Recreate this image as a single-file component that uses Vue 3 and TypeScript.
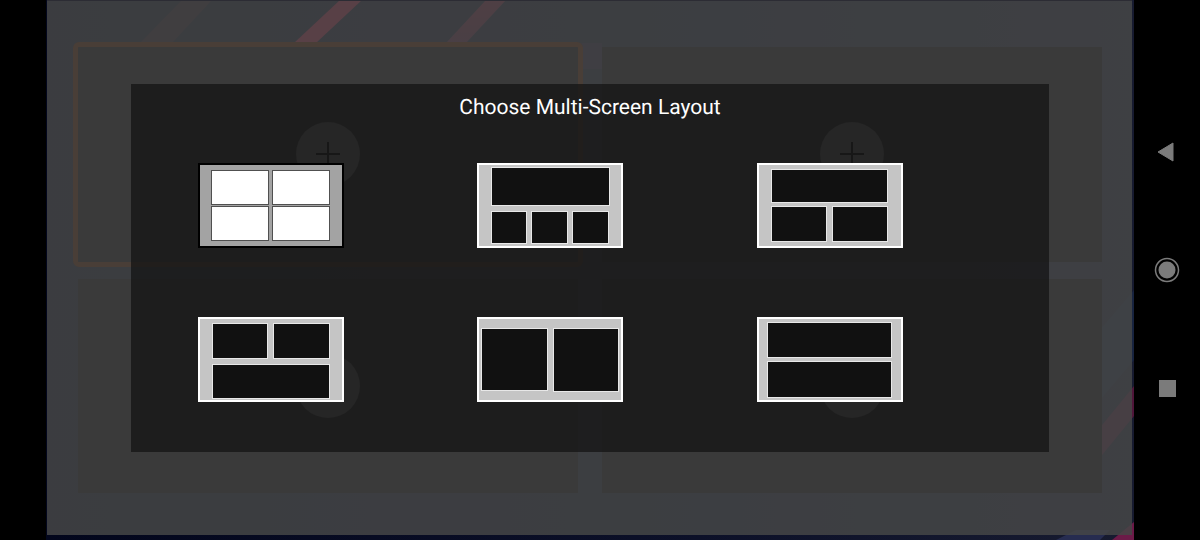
<script setup lang="ts">
import { ref } from 'vue'

type Pane = [x: number, y: number, width: number, height: number]

interface LayoutOption {
  id: string
  label: string
  panes: Pane[]
}

const layouts: LayoutOption[] = [
  {
    id: 'quad',
    label: 'Four screens',
    panes: [[14, 8, 56, 33], [75, 8, 56, 33], [14, 44, 56, 33], [75, 44, 56, 33]],
  },
  {
    id: 'one-three',
    label: 'One screen above three',
    panes: [[15, 5, 117, 37], [15, 49, 34, 31], [55, 49, 35, 31], [96, 49, 35, 31]],
  },
  {
    id: 'one-two',
    label: 'One screen above two',
    panes: [[15, 7, 115, 32], [15, 44, 54, 34], [76, 44, 54, 34]],
  },
  {
    id: 'two-one',
    label: 'Two screens above one',
    panes: [[15, 7, 54, 34], [76, 7, 55, 34], [15, 48, 116, 33]],
  },
  {
    id: 'side-by-side',
    label: 'Two screens side by side',
    panes: [[5, 12, 65, 61], [77, 12, 64, 62]],
  },
  {
    id: 'stacked',
    label: 'Two stacked screens',
    panes: [[11, 6, 123, 34], [11, 45, 123, 35]],
  },
]

const slots = [1, 2, 3, 4]
const activeSlot = ref(1)
const selected = ref('quad')
</script>

<template>
  <div class="device">
    <main class="stage">
      <svg class="wallpaper" viewBox="0 0 1088 540" preserveAspectRatio="none" aria-hidden="true">
        <defs>
          <linearGradient id="sky" x1="0" y1="0" x2="1" y2="0">
            <stop offset="0" stop-color="#02061c" />
            <stop offset="0.6" stop-color="#0c1028" />
            <stop offset="1" stop-color="#171b30" />
          </linearGradient>
          <linearGradient id="streak" x1="0" y1="0" x2="0" y2="1">
            <stop offset="0" stop-color="#861a38" />
            <stop offset="1" stop-color="#60183c" />
          </linearGradient>
        </defs>
        <rect width="1088" height="540" fill="url(#sky)" />
        <path d="M294 0h22l-46 43h-22z" fill="#c01c44" />
        <path d="M440 0h20l-40 43h-20z" fill="url(#streak)" />
        <path d="M136 0h30l-40 43H94z" fill="#26101e" />
        <path d="M534 43h22v26h-22z" fill="#1c1230" />
        <path d="M1088 290v70l-34 40v-70z" fill="#182440" />
        <path d="M1088 386v30l-36 44v-30z" fill="#50163a" />
        <path d="M1088 522v18h-22z" fill="#6c1a48" />
        <path d="M1010 540l20-10h34l-10 10z" fill="#262c50" />
      </svg>

      <div class="slots">
        <section v-for="slot in slots" :key="slot" class="slot" :class="{ active: slot === activeSlot }">
          <button class="add" type="button" :aria-label="`Add to screen ${slot}`" @click="activeSlot = slot">
            <svg width="24" height="24" viewBox="0 0 24 24" aria-hidden="true">
              <path d="M12 0v24M0 12h24" stroke="#262626" stroke-width="2" />
            </svg>
          </button>
        </section>
      </div>

      <div class="overlay">
        <div class="dialog" role="dialog" aria-labelledby="dialog-title">
          <h1 id="dialog-title">Choose Multi-Screen Layout</h1>
          <div class="options">
            <button
              v-for="layout in layouts"
              :key="layout.id"
              class="option"
              :class="{ selected: selected === layout.id }"
              type="button"
              :aria-label="layout.label"
              :aria-pressed="selected === layout.id"
              @click="selected = layout.id"
            >
              <svg width="146" height="85" viewBox="0 0 146 85" shape-rendering="crispEdges" aria-hidden="true">
                <rect class="frame" width="146" height="85" />
                <rect class="fill" x="2" y="2" width="142" height="81" />
                <g v-for="([x, y, width, height], index) in layout.panes" :key="index">
                  <rect class="edge" :x="x - 1" :y="y - 1" :width="width + 2" :height="height + 2" />
                  <rect class="pane" :x="x" :y="y" :width="width" :height="height" />
                </g>
              </svg>
            </button>
          </div>
        </div>
      </div>
    </main>

    <nav class="system" aria-label="System navigation">
      <button type="button" aria-label="Back">
        <svg width="28" height="28" viewBox="0 0 28 28" aria-hidden="true">
          <path d="M5 14 20 5v18z" fill="#7b7b7b" stroke="#7b7b7b" stroke-linejoin="round" />
        </svg>
      </button>
      <button type="button" aria-label="Home">
        <svg width="28" height="28" viewBox="0 0 28 28" aria-hidden="true">
          <circle cx="14" cy="14" r="11.500" fill="none" stroke="#7b7b7b" stroke-width="1.500" />
          <circle cx="14" cy="14" r="8.500" fill="#7b7b7b" />
        </svg>
      </button>
      <button type="button" aria-label="Recent apps">
        <svg width="28" height="28" viewBox="0 0 28 28" aria-hidden="true">
          <rect x="6" y="6" width="17" height="17" fill="#7b7b7b" />
        </svg>
      </button>
    </nav>
  </div>
</template>

<style>
body {
  margin: 0;
  background: #000;
}
</style>

<style scoped>
.device {
  display: grid;
  grid-template-columns: 46px 1fr 66px;
  min-height: 100vh;
  background: #000;
  font-family: Roboto, "Liberation Sans", sans-serif;
}

button {
  display: flex;
  align-items: center;
  justify-content: center;
  padding: 0;
  border: 0;
  background: none;
  cursor: pointer;
}

.stage {
  position: relative;
  grid-column: 2;
  display: flex;
}

.wallpaper {
  position: absolute;
  inset: 0;
  width: 100%;
  height: 100%;
}

.slots {
  position: relative;
  flex: 1;
  display: grid;
  grid-template-columns: 1fr 1fr;
  grid-template-rows: 1fr 1fr;
  gap: 17px 24px;
  margin: 0 2px 5px 1px;
  padding: 46px 30px 42px 31px;
  border-top: 1px solid #2c2c34;
  background: rgba(69, 70, 70, 0.85);
}

.slot {
  display: flex;
  align-items: center;
  justify-content: center;
  background: #3a3a3a;
}

.slot.active {
  border-radius: 1px;
  outline: 5px solid #493e37;
}

.add {
  width: 64px;
  height: 64px;
  border-radius: 50%;
  background: #575757;
}

.overlay {
  position: absolute;
  inset: 0;
  display: flex;
  padding: 84px 85px 88px;
}

.dialog {
  flex: 1;
  background: rgba(17, 17, 17, 0.7);
}

h1 {
  margin: 0;
  padding: 12px 0 43px;
  color: #fff;
  font-size: 21px;
  font-weight: 400;
  line-height: 24px;
  text-align: center;
  text-rendering: geometricPrecision;
}

.options {
  display: grid;
  grid-template-columns: repeat(3, 1fr);
  row-gap: 69px;
  justify-items: center;
  padding-right: 79px;
}

.option svg {
  display: block;
}

.frame {
  fill: #fff;
}

.fill {
  fill: #c5c5c5;
}

.edge {
  fill: #e8e8e8;
}

.pane {
  fill: #111;
}

.selected .frame {
  fill: #000;
}

.selected .fill {
  fill: #a3a3a3;
}

.selected .edge {
  fill: #505050;
}

.selected .pane {
  fill: #fff;
}

.system {
  grid-column: 3;
  display: flex;
  flex-direction: column;
  align-items: center;
  justify-content: center;
  gap: 70px;
}

.system button {
  width: 48px;
  height: 48px;
}
</style>
